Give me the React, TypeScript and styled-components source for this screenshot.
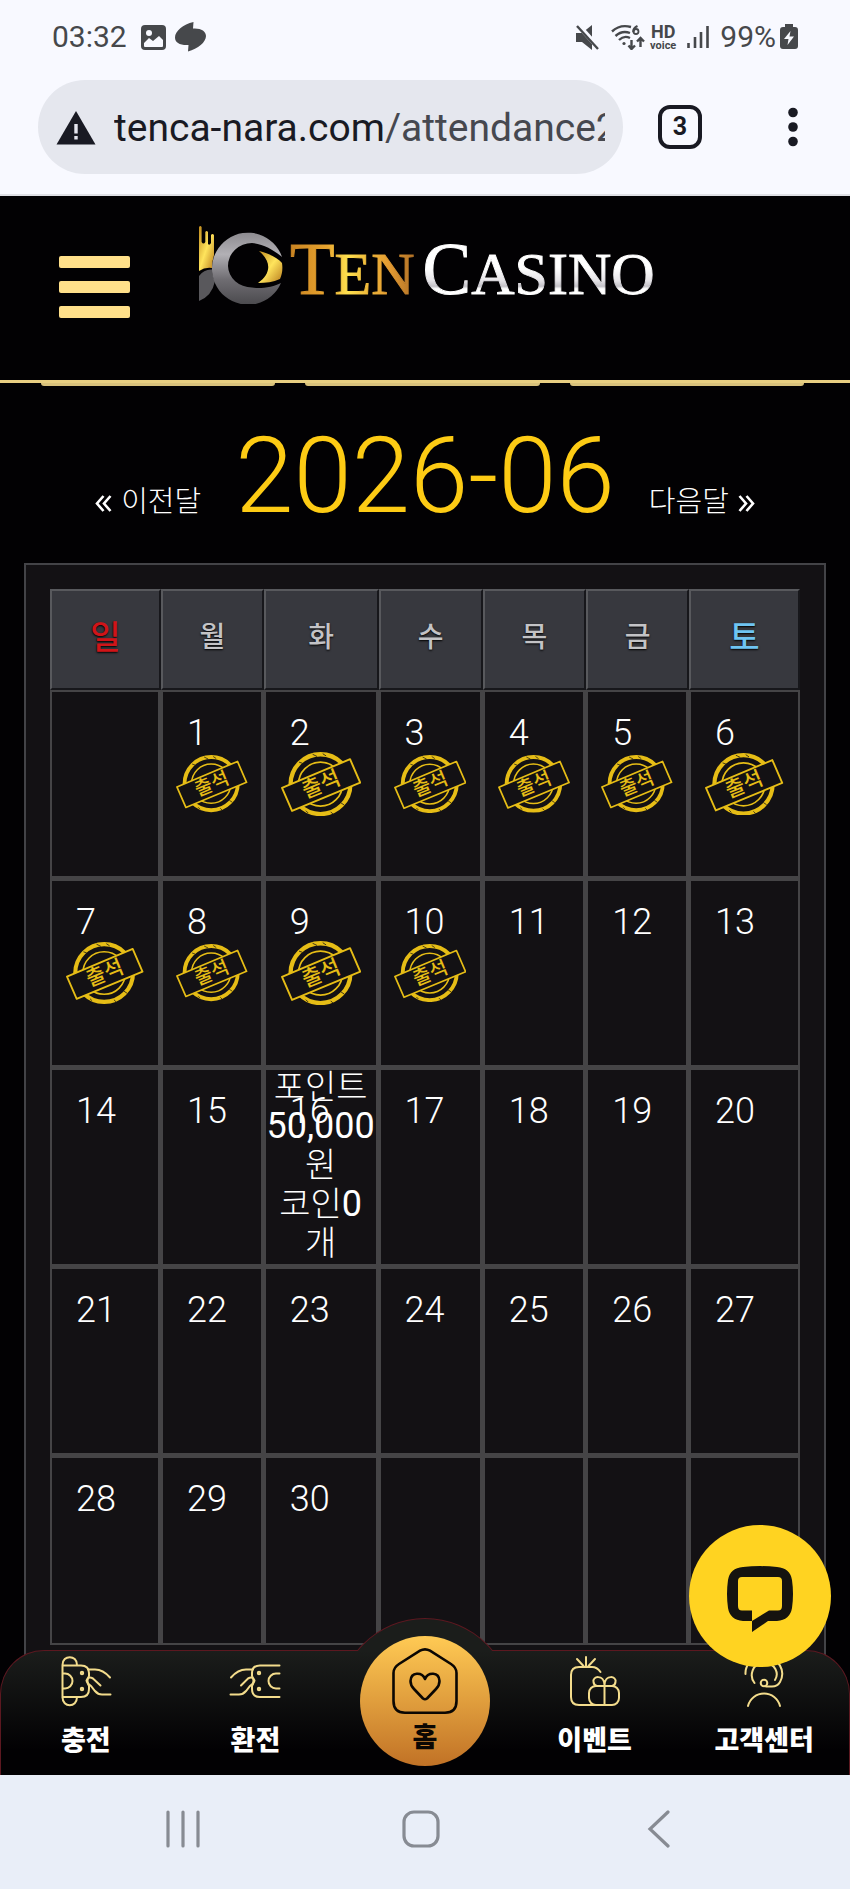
import styled, { createGlobalStyle } from "styled-components";

const WEEKDAYS = ["일", "월", "화", "수", "목", "금", "토"];
const COLUMN_WIDTHS = [14.8, 13.7, 15.3, 13.9, 13.8, 13.7, 14.8];
const FIRST_WEEKDAY = 1;
const LAST_DATE = 30;
const ATTENDED_UNTIL = 10;
const REWARD_DATE = 16;

const weeks = Array.from({ length: 5 }, (_, week) =>
  Array.from({ length: 7 }, (_, day) => {
    const date = week * 7 + day - FIRST_WEEKDAY + 1;
    return date > 0 && date <= LAST_DATE ? date : null;
  })
);

const Stamp = () => (
  <StampSvg viewBox="0 0 71 57" role="img" aria-label="출석">
    <g fill="none" stroke="#e6bd16">
      <circle cx="35" cy="28.5" r="26.5" strokeWidth="3.8" />
      <circle cx="35" cy="28.5" r="19.5" strokeWidth="1.5" />
      <path d="M.9 31.8 61.2 6.4 70.2 27.2 9.8 52.2Z" fill="#131114" strokeWidth="1.7" strokeLinejoin="round" />
    </g>
    <path d="m16 9 3 1M28 2l4 2M37 1.500l3 2M53 45l3 2M44 53l2 2M22 52l2 2" stroke="#131114" strokeWidth=".7" />
    <text x="35.500" y="35" transform="rotate(-22.500 35.500 28.500)">
      출석
    </text>
  </StampSvg>
);

const Emblem = () => (
  <svg width="86" height="79" viewBox="0 0 86 79" aria-hidden="true">
    <defs>
      <linearGradient id="steel" x1="0" y1="0" x2="0" y2="1">
        <stop offset="0" stopColor="#8d8b90" />
        <stop offset=".3" stopColor="#b2b0b5" />
        <stop offset=".65" stopColor="#6f6d72" />
        <stop offset="1" stopColor="#4b4a4e" />
      </linearGradient>
      <linearGradient id="gold" x1="0" y1="0" x2="1" y2="1">
        <stop offset="0" stopColor="#c08a1c" />
        <stop offset=".5" stopColor="#ffe45c" />
        <stop offset="1" stopColor="#b87c1e" />
      </linearGradient>
    </defs>
    <path
      d="M1 2Q2.300 0 3.600 2V17Q5.500 20 7.300 17V7Q8.600 5 10 7V19Q11.500 21 13 18V10Q14.500 8 16 10V30Q14 36 14 43 7 42 1 46Z"
      fill="url(#gold)"
    />
    <path d="M1 51Q6 44 14 44.500 14.500 52 17 56 14 71 1 76Z" fill="#59585c" />
    <path
      d="M84 32A36 36 0 1 0 83 58C76 62 62 64 54 62.500A24 22 0 0 1 30 41 24 23 0 0 1 54 18C65 19 76 25 84 32Z"
      fill="url(#steel)"
    />
    <path d="M61 26C72 29 80 33 84 38 85 44 84 50 82 54 75 57 68 58 60 58 74 48 73 36 61 26Z" fill="url(#gold)" />
  </svg>
);

const StatusBar = () => (
  <StatusRow>
    <StatusGroup $gap={14}>
      <StatusText>03:32</StatusText>
      <StatusGroup $gap={8}>
        <svg width="25" height="25" viewBox="0 0 25 25">
          <rect width="25" height="25" rx="4" fill="#46484b" />
          <path d="M3 21V18L8 13 12 16 18 11 22 15V21Q22 22 21 22H4Q3 22 3 21Z" fill="#f8f9ff" />
          <circle cx="8" cy="8" r="3" fill="#f8f9ff" />
        </svg>
        <svg width="33" height="30" viewBox="0 0 33 30">
          <path
            d="M19.500 0 19 6.500C27 6 32 9 32 14 32 20 24 27 14 29.500L14.500 23C6 23.500 1 20.500 1 15.500 1 9 9 2.500 19.500 0Z"
            fill="#46484b"
          />
        </svg>
      </StatusGroup>
    </StatusGroup>
    <StatusGroup $gap={11}>
      <svg width="25" height="25" viewBox="0 0 25 25">
        <path d="M1 8H7L17 0V25L7 17H1Z" fill="#46484b" />
        <path d="M3 0 24 23" stroke="#f8f9ff" strokeWidth="5" />
        <path d="M2 1 23 24" stroke="#46484b" strokeWidth="2.400" />
      </svg>
      <StatusGroup $gap={5}>
        <svg width="34" height="26" viewBox="0 0 34 26" fill="none" stroke="#46484b" strokeWidth="2.400">
          <path d="M1 7.500Q9 0 20 3M4.500 12Q11 6 19 9M8 16Q13 11 19 14" />
          <circle cx="13" cy="19.500" r="1.600" fill="#46484b" stroke="none" />
          <path d="M26.500 2Q22 4 22.500 8M20.500 16V25M17.500 21.500 20.500 25 24 21.500M29.500 23V14M26 17.500 29.500 14 33 17.500" />
          <circle cx="25" cy="7.500" r="2.500" strokeWidth="1.800" />
        </svg>
        <HdVoice>
          <strong>HD</strong>
          <small>voice</small>
        </HdVoice>
      </StatusGroup>
      <svg width="22" height="24" viewBox="0 0 22 24">
        <path d="M1.500 18V23M8 12V23M14 7V23M20.500 1V23" stroke="#46484b" strokeWidth="2.600" />
      </svg>
      <StatusGroup $gap={4}>
        <StatusText>99%</StatusText>
        <svg width="18" height="26" viewBox="0 0 18 26">
          <path d="M5 0H13V3H15Q18 3 18 6V22Q18 25 15 25H3Q0 25 0 22V6Q0 3 3 3H5Z" fill="#46484b" />
          <path d="M10.500 7 4 15H8.500L7.500 21 14 12.500H9.500Z" fill="#f8f9ff" />
        </svg>
      </StatusGroup>
    </StatusGroup>
  </StatusRow>
);

const AddressBar = () => (
  <AddressRow>
    <AddressField type="button">
      <svg width="40" height="34" viewBox="0 0 40 34">
        <path d="M20 0 39.500 33.500H.5Z" fill="#191a23" />
        <path d="M20 13V22.500M20 25V28.500" stroke="#e5e6ef" strokeWidth="3.400" />
      </svg>
      <AddressText>
        tenca-nara.com<span>/attendance2</span>
      </AddressText>
    </AddressField>
    <TabCount type="button">3</TabCount>
    <MenuButton type="button" aria-label="더보기">
      <svg width="10" height="40" viewBox="0 0 10 40" fill="#191a23">
        <circle cx="5" cy="5.500" r="4.800" />
        <circle cx="5" cy="20" r="4.800" />
        <circle cx="5" cy="34.500" r="4.800" />
      </svg>
    </MenuButton>
  </AddressRow>
);

const DayCell = ({ date }: { date: number | null }) => (
  <Cell>
    {date && <DateNumber>{date}</DateNumber>}
    {date && date <= ATTENDED_UNTIL && <Stamp />}
    {date === REWARD_DATE && (
      <Reward>
        포인트
        <br />
        <b>50,000</b>
        <br />원<br />
        코인<b>0</b>
        <br />개
      </Reward>
    )}
  </Cell>
);

const Calendar = () => (
  <Panel>
    <Table>
      <colgroup>
        {COLUMN_WIDTHS.map((width, i) => (
          <Column key={i} $width={width} />
        ))}
      </colgroup>
      <thead>
        <tr>
          {WEEKDAYS.map((day) => (
            <Weekday key={day} scope="col" $day={day}>
              {day}
            </Weekday>
          ))}
        </tr>
      </thead>
      <tbody>
        {weeks.map((week, i) => (
          <tr key={i}>
            {week.map((date, day) => (
              <DayCell key={day} date={date} />
            ))}
          </tr>
        ))}
      </tbody>
    </Table>
  </Panel>
);

const ChargeIcon = () => (
  <NavSvg viewBox="0 0 50 50">
    <path d="M1.500 9V42M1.500 9C1.500-1.500 16-1.500 16 9M1.500 41C1.500 52 16 52 16 41M1.500 9.500H20Q28 9.500 28 17V20Q25 25 28 30V33Q28 41 20 41H1.500M1.500 17.500H4A7.500 7.500 0 0 1 4 32.500H1.500" />
    <path d="M27 13.500H34Q42 13.500 49 21.500M39.500 29.500 32 22.500Q27 20 25.500 24.500 26 27 30 30L34 35Q37 38.500 41 38.500H49.500" />
    <circle cx="21" cy="17" r="1.200" />
    <circle cx="21" cy="33" r="1.200" />
  </NavSvg>
);

const WithdrawIcon = () => (
  <NavSvg viewBox="0 0 50 50">
    <path d="M49.500 9.500H30Q22 9.500 22 17V20Q25 25 22 30V33Q22 41 30 41H49.500M49.500 17.500H46A7.500 7.500 0 0 0 46 32.500H49.500" />
    <path d="M23 13.500H16Q8 13.500 1 21.500M11 29.500 18 22.500Q23 20 24.500 24.500 24 27 20 30L16 35Q13 38.500 9 38.500H.5" />
    <circle cx="29" cy="17" r="1.200" />
    <circle cx="29" cy="33" r="1.200" />
  </NavSvg>
);

const EventIcon = () => (
  <NavSvg viewBox="0 0 50 50">
    <path d="M16 1V10M7 3 13.500 10M25 3 18.500 10M30.500 16Q27 11 22 11H9Q1 11 1 19V41Q1 49 9 49H26" />
    <rect x="19" y="30" width="30" height="19" rx="7" />
    <path d="M34.500 49V29C34 18 22 20 23.500 26Q24 29.500 27 30M34.500 29C35 18 47 20 45.500 26Q45 29.500 42 30" />
  </NavSvg>
);

const SupportIcon = () => (
  <NavSvg viewBox="0 0 50 50">
    <path d="M9 50A16.500 16.500 0 0 1 41 50M15.500 27C10 20 13 7 25 7 37 7 40 18 36 24M6.500 18C6 9 13 1 25 1 40 1 47 15 41 26Q38.500 30.500 33 30.500H27" />
    <circle cx="25" cy="27" r="3.300" />
  </NavSvg>
);

const HomeIcon = () => (
  <svg width="66" height="66" viewBox="0 0 66 66" fill="none" stroke="#0b0703" strokeWidth="2.600">
    <path d="M28 2.700Q33 0 38 2.700L59 16Q64.500 19.500 64.500 25V53Q64.500 64.700 53 64.700H13Q1.500 64.700 1.500 53V25Q1.500 19.500 7 16Z" />
    <path
      d="M33 31C30 24 19 23.500 18.500 33 18.500 37 20 39 22 41L31 50.500Q33 52 35 50.500L44 41C46 39 47.500 37 47.500 33 47 23.500 36 24 33 31Z"
      strokeLinejoin="round"
    />
  </svg>
);

const SystemNav = () => (
  <SystemBar>
    <SystemButton type="button" aria-label="최근 앱">
      <svg width="38" height="38" viewBox="0 0 38 38">
        <path d="M4 2V36M19 2V36M34 2V36" />
      </svg>
    </SystemButton>
    <SystemButton type="button" aria-label="홈 화면">
      <svg width="38" height="38" viewBox="0 0 38 38">
        <rect x="2" y="2" width="34" height="34" rx="10" />
      </svg>
    </SystemButton>
    <SystemButton type="button" aria-label="뒤로">
      <svg width="38" height="38" viewBox="0 0 38 38">
        <path d="M28 2 10 19 28 36" />
      </svg>
    </SystemButton>
  </SystemBar>
);

const App = () => (
  <>
    <GlobalStyle />
    <BrowserTop>
      <StatusBar />
      <AddressBar />
    </BrowserTop>
    <Site>
      <SiteHeader>
        <Burger type="button" aria-label="메뉴">
          <i />
          <i />
          <i />
        </Burger>
        <Logo href="#">
          <Emblem />
          <LogoText>
            <Gold>
              T<small>EN</small>
            </Gold>
            <Silver>
              C<small>ASINO</small>
            </Silver>
          </LogoText>
        </Logo>
      </SiteHeader>
      <ScrolledTabs>
        <i />
        <i />
        <i />
      </ScrolledTabs>
      <MonthBar>
        <MonthLink href="#">
          <svg width="17" height="17" viewBox="0 0 17 17">
            <path d="M8.500 1 2 8.500 8.500 16M15.500 1 9 8.500 15.500 16" />
          </svg>
          <span>이전달</span>
        </MonthLink>
        <MonthTitle>2026-06</MonthTitle>
        <MonthLink href="#">
          <span>다음달</span>
          <svg width="17" height="17" viewBox="0 0 17 17">
            <path d="M1.500 1 8 8.500 1.500 16M8.500 1 15 8.500 8.500 16" />
          </svg>
        </MonthLink>
      </MonthBar>
      <Calendar />
      <BottomNav>
        <Bump />
        <NavLink href="#">
          <ChargeIcon />
          충전
        </NavLink>
        <NavLink href="#">
          <WithdrawIcon />
          환전
        </NavLink>
        <HomeSlot>
          <HomeLink href="#">
            <HomeIcon />홈
          </HomeLink>
        </HomeSlot>
        <NavLink href="#">
          <EventIcon />
          이벤트
        </NavLink>
        <NavLink href="#">
          <SupportIcon />
          고객센터
        </NavLink>
      </BottomNav>
      <ChatButton type="button" aria-label="채팅 상담">
        <svg width="66" height="66" viewBox="0 0 66 66">
          <path
            fillRule="evenodd"
            fill="#15130f"
            d="M16 1Q33-.8 50 1 63 2 65 14 67 28 65 42 63 54 50 55H41L25 66V55H16Q3 54 1 42-1 28 1 14 3 2 16 1ZM15 11Q11 11 11 15V40Q11 44.500 15 44.500H25V55L42 44.500H51Q55 44.500 55 40V15Q55 11 51 11Z"
          />
        </svg>
      </ChatButton>
    </Site>
    <SystemNav />
  </>
);

const GlobalStyle = createGlobalStyle`
  * {
    box-sizing: border-box;
  }
  body {
    margin: 0;
    background: #e9eef8;
    font-family: Roboto, "Noto Sans CJK KR", sans-serif;
  }
  button {
    padding: 0;
    border: none;
    background: none;
    font-family: inherit;
  }
  a {
    color: inherit;
    text-decoration: none;
  }
  svg {
    flex-shrink: 0;
  }
`;
const BrowserTop = styled.header`
  padding-top: 19px;
  padding-bottom: 20px;
  background: #f8f9ff;
  border-bottom: 2px solid #dfe0e6;
`;
const StatusRow = styled.div`
  display: flex;
  justify-content: space-between;
  align-items: center;
  height: 36px;
  padding: 0 52px;
`;
const StatusGroup = styled.div<{ $gap: number }>`
  display: flex;
  align-items: center;
  gap: ${({ $gap }) => $gap}px;
`;
const StatusText = styled.span`
  font-size: 30px;
  line-height: 36px;
  color: #46484b;
`;
const HdVoice = styled.span`
  display: flex;
  flex-direction: column;
  align-items: center;
  color: #46484b;
  strong {
    font-size: 18px;
    line-height: 16px;
  }
  small {
    font-size: 11px;
    line-height: 11px;
    font-weight: 700;
  }
`;
const AddressRow = styled.div`
  display: flex;
  align-items: center;
  margin-top: 25px;
  padding: 0 52px 0 38px;
`;
const AddressField = styled.button`
  display: flex;
  flex: 1;
  align-items: center;
  gap: 18px;
  min-width: 0;
  height: 94px;
  padding: 2px 18px 0;
  border-radius: 47px;
  background: #e5e7ee;
`;
const AddressText = styled.span`
  flex: 1;
  overflow: hidden;
  font-size: 39px;
  line-height: 48px;
  text-align: left;
  white-space: nowrap;
  color: #191a23;
  span {
    color: #46484f;
  }
`;
const TabCount = styled.button`
  width: 44px;
  height: 44px;
  margin-left: 35px;
  border: 4px solid #191a23;
  border-radius: 12px;
  font-size: 25px;
  font-weight: 700;
  line-height: 36px;
  color: #191a23;
`;
const MenuButton = styled.button`
  display: flex;
  margin-left: 86px;
`;
const Site = styled.main`
  position: relative;
  padding-bottom: 104px;
  background: #020103;
`;
const SiteHeader = styled.div`
  display: flex;
  align-items: flex-start;
  height: 187px;
  padding-left: 59px;
  border-bottom: 3px solid #e8cf82;
`;
const Burger = styled.button`
  display: flex;
  flex-direction: column;
  gap: 13px;
  width: 71px;
  margin-top: 60px;
  i {
    height: 12px;
    border-radius: 2px;
    background: #ffe08a;
  }
`;
const Logo = styled.a`
  display: flex;
  align-items: flex-start;
  gap: 6px;
  margin-top: 29px;
  margin-left: 68px;
`;
const LogoText = styled.span`
  display: flex;
  gap: 8px;
  margin-top: 5px;
  font-family: "Liberation Serif", serif;
  font-size: 73px;
  line-height: 80px;
  -webkit-text-stroke: 1px transparent;
  small {
    font-size: 60px;
  }
`;
const Gold = styled.span`
  background: linear-gradient(90deg, #c98322, #e9a52f 30%, #ffe14f 46%, #f0b93a 62%, #e39a32 80%, #b07026);
  background-clip: text;
  color: transparent;
`;
const Silver = styled.span`
  background: linear-gradient(180deg, #fff 45%, #e6e4e8 60%, #c4c2c8 67%, #fff 70%);
  background-clip: text;
  color: transparent;
`;
const ScrolledTabs = styled.div`
  display: grid;
  grid-template-columns: repeat(3, 1fr);
  gap: 30px;
  padding: 0 46px 0 41px;
  i {
    height: 3px;
    border-radius: 0 0 8px 8px;
    background: #d9c27c;
  }
`;
const MonthBar = styled.div`
  display: flex;
  justify-content: center;
  align-items: baseline;
  gap: 34px;
  padding-top: 30px;
  padding-bottom: 25px;
`;
const MonthTitle = styled.h1`
  margin: 0;
  font-size: 105px;
  font-weight: 300;
  line-height: 122px;
  color: #fdcb14;
`;
const MonthLink = styled.a`
  font-size: 29px;
  font-weight: 300;
  line-height: 40px;
  color: #fff;
  white-space: nowrap;
  svg {
    fill: none;
    stroke: #fff;
    stroke-width: 2.6;
  }
  svg + span,
  span + svg {
    margin-left: 9px;
  }
`;
const Panel = styled.section`
  margin: 0 24px;
  padding: 24px;
  border: 2px solid #434347;
  background: #131114;
`;
const Table = styled.table`
  width: 100%;
  table-layout: fixed;
  border-collapse: separate;
  border-spacing: 0;
`;
const Column = styled.col<{ $width: number }>`
  width: ${({ $width }) => $width}%;
`;
const Weekday = styled.th<{ $day: string }>`
  height: 101px;
  padding: 0 0 4px;
  border: 2px solid;
  border-color: #58595d #17171b #17171b #58595d;
  background: #37383e;
  font-size: ${({ $day }) => ($day === "일" || $day === "토" ? 33 : 28)}px;
  font-weight: 500;
  line-height: 40px;
  color: ${({ $day }) => ($day === "일" ? "#d01418" : $day === "토" ? "#6fc4f2" : "#c3c3c6")};
  text-shadow: 0 1px 2px #000;
`;
const Cell = styled.td`
  position: relative;
  height: 189px;
  padding: 0;
  border: 2px solid #454446;
  border-right-width: 3px;
  text-align: center;
  vertical-align: middle;
  tr:not(:last-child) > & {
    border-bottom-width: 3px;
  }
  &:last-child {
    border-right-width: 2px;
  }
`;
const DateNumber = styled.span`
  position: absolute;
  top: 20px;
  left: 24px;
  font-size: 36px;
  font-weight: 300;
  line-height: 42px;
  color: #fff;
`;
const StampSvg = styled.svg`
  display: block;
  width: 73%;
  margin: 0 auto;
  text {
    fill: #e6bd16;
    font-size: 19px;
    font-weight: 500;
    text-anchor: middle;
  }
`;
const Reward = styled.div`
  margin-top: -2px;
  margin-bottom: 1px;
  font-size: 34px;
  font-weight: 300;
  line-height: 39px;
  color: #fff;
  b {
    font-size: 36px;
    font-weight: 400;
    line-height: 36px;
  }
`;
const BottomNav = styled.nav`
  position: absolute;
  right: 0;
  bottom: 0;
  left: 0;
  display: grid;
  grid-template-columns: repeat(5, 1fr);
  height: 125px;
  border: 1px solid #5c1820;
  border-bottom: none;
  border-radius: 44px 44px 0 0;
  background: linear-gradient(#1b1d1b, #020103 80%);
`;
const Bump = styled.div`
  position: absolute;
  top: -33px;
  left: 50%;
  width: 176px;
  height: 33px;
  margin-left: -88px;
  overflow: hidden;
  &::before {
    content: "";
    display: block;
    height: 176px;
    border: 1px solid #5c1820;
    border-radius: 50%;
    background: #1b1d1b;
  }
`;
const NavLink = styled.a`
  display: flex;
  flex-direction: column;
  align-items: center;
  gap: 17px;
  padding-top: 5px;
  font-size: 27px;
  font-weight: 900;
  line-height: 36px;
  color: #fff;
  white-space: nowrap;
`;
const NavSvg = styled.svg`
  width: 50px;
  height: 50px;
  fill: none;
  stroke: #f3dc8c;
  stroke-width: 2;
  stroke-linecap: round;
  overflow: visible;
`;
const HomeSlot = styled.div`
  position: relative;
  display: flex;
  justify-content: center;
`;
const HomeLink = styled.a`
  position: absolute;
  top: -15px;
  display: flex;
  flex-direction: column;
  align-items: center;
  width: 130px;
  height: 130px;
  gap: 6px;
  padding-top: 12px;
  border-radius: 50%;
  background: linear-gradient(#ffca54, #c17226);
  font-size: 27px;
  font-weight: 900;
  line-height: 36px;
  color: #0b0703;
`;
const ChatButton = styled.button`
  position: absolute;
  right: 19px;
  bottom: 108px;
  display: flex;
  justify-content: center;
  align-items: center;
  width: 142px;
  height: 142px;
  padding-top: 5px;
  border-radius: 50%;
  background: #ffd321;
`;
const SystemBar = styled.footer`
  display: flex;
  justify-content: center;
  gap: 200px;
  height: 114px;
  padding: 35px 8px 0 0;
  background: #e9eef8;
`;
const SystemButton = styled.button`
  display: flex;
  align-items: flex-start;
  svg {
    fill: none;
    stroke: #878b93;
    stroke-width: 3.2;
    stroke-linecap: round;
  }
`;

export default App;
